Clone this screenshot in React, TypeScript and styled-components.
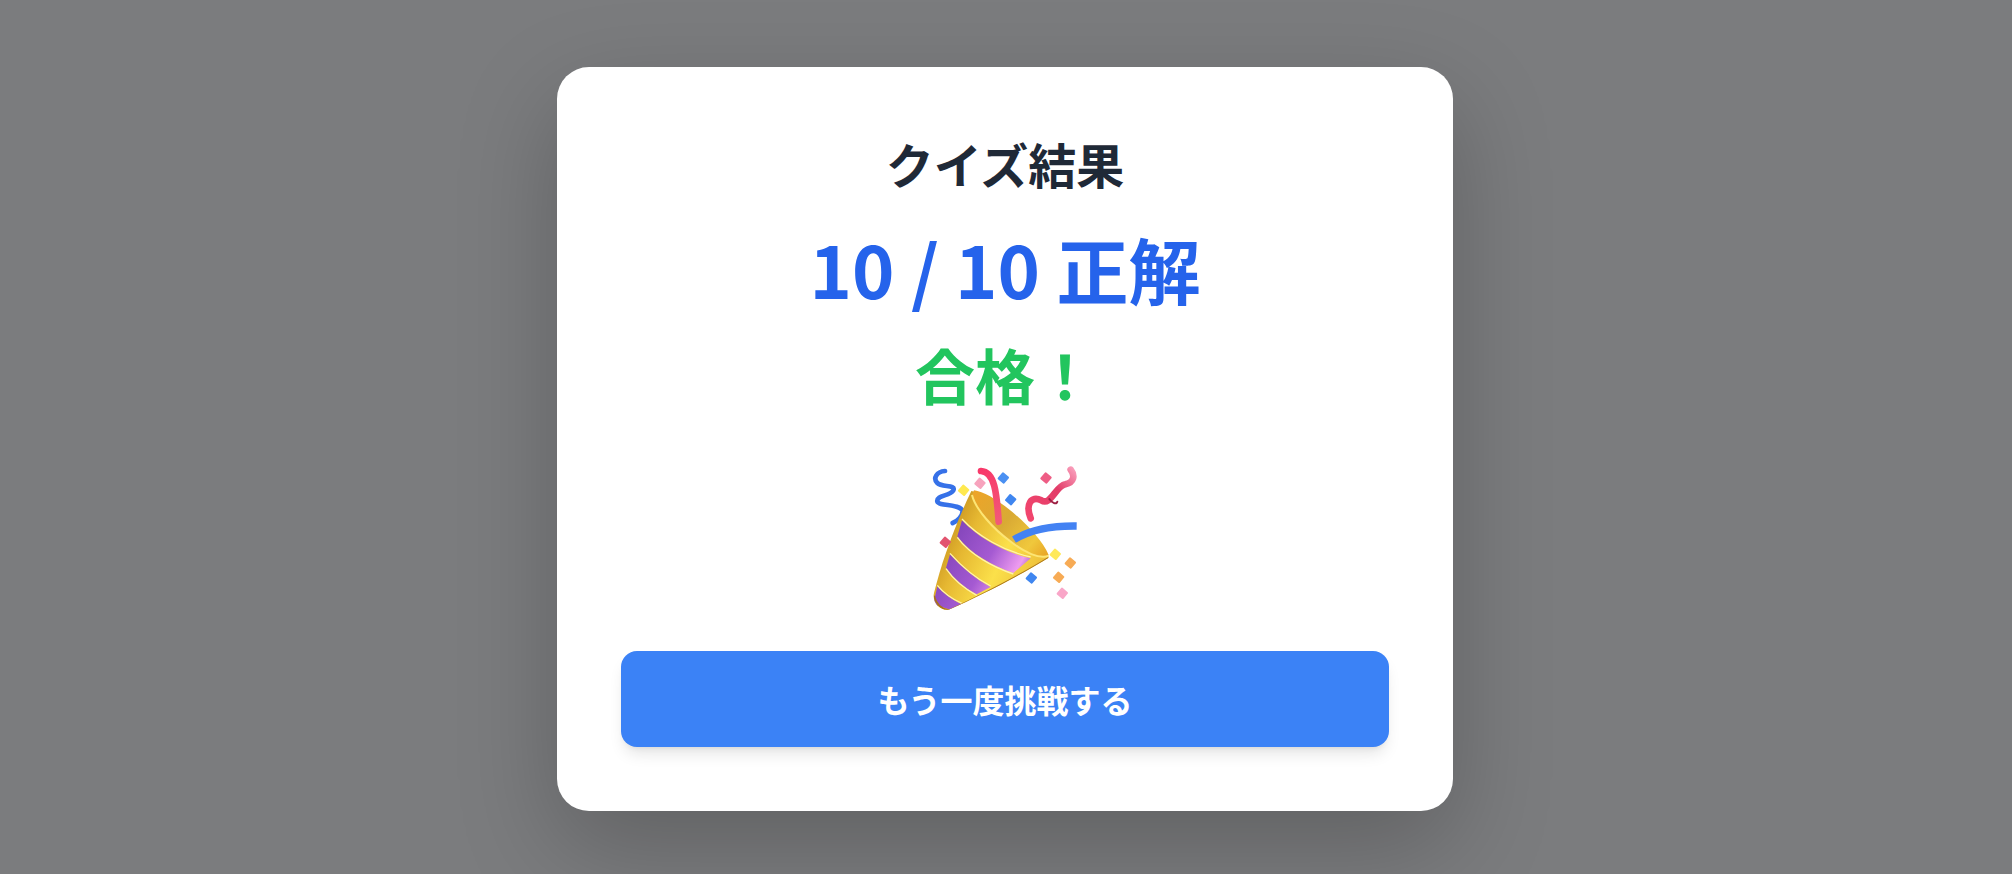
import React from "react";
import styled, { createGlobalStyle } from "styled-components";

const GlobalStyle = createGlobalStyle`
  html, body {
    margin: 0;
    padding: 0;
    background: #7b7c7e;
  }
  * {
    box-sizing: border-box;
  }
`;

const Overlay = styled.div`
  width: 100%;
  height: 874px;
  overflow: hidden;
  background: #7b7c7e;
  display: flex;
  align-items: flex-start;
  justify-content: center;
  padding: 67px 2px 0 0;
  font-family: "Noto Sans CJK JP", "Noto Sans", sans-serif;
`;

const Card = styled.div`
  width: 896px;
  height: 744px;
  padding: 64px;
  background: #ffffff;
  border-radius: 32px;
  box-shadow: 0 35px 100px rgba(0, 0, 0, 0.22);
  display: flex;
  flex-direction: column;
  align-items: center;
  text-align: center;
`;

const Title = styled.h2`
  margin: 0 0 17px;
  font-size: 48px;
  line-height: 64px;
  font-weight: 700;
  color: #1f2937;
`;

const Score = styled.p`
  margin: 0 0 5px;
  font-size: 72px;
  line-height: 112px;
  font-weight: 700;
  color: #2563eb;
`;

const Verdict = styled.p`
  margin: 0 0 30px;
  font-size: 60px;
  line-height: 90px;
  font-weight: 700;
  color: #22c55e;
`;

const EmojiBox = styled.div`
  height: 170px;
  margin-bottom: 32px;
`;

const RetryButton = styled.button`
  width: 100%;
  height: 96px;
  border: none;
  border-radius: 16px;
  background: #3b82f6;
  color: #ffffff;
  font-family: inherit;
  font-size: 32px;
  font-weight: 700;
  box-shadow: 0 10px 15px -3px rgba(0, 0, 0, 0.1), 0 4px 6px -4px rgba(0, 0, 0, 0.1);
  cursor: pointer;
`;

const confetti = [
  { x: 240, y: 103, c: "#f7a3bd" },
  { x: 191, y: 124, c: "#ffe94f" },
  { x: 310, y: 87, c: "#4a90f2" },
  { x: 332, y: 152, c: "#3f86f0" },
  { x: 438, y: 87, c: "#ee5d85" },
  { x: 136, y: 280, c: "#e2546f" },
  { x: 466, y: 316, c: "#ffe95a" },
  { x: 511, y: 342, c: "#f7ab55" },
  { x: 476, y: 385, c: "#f7ab55" },
  { x: 394, y: 387, c: "#3f86f0" },
  { x: 487, y: 433, c: "#f9a6c8" }
];

const conePath =
  "M214 126 C160 240 125 340 102 432 C96 460 118 486 146 482 C240 440 350 385 446 326 C430 270 280 135 214 126 Z";

const PartyPopper = () => (
  <svg width="210" height="170" viewBox="0 0 630 510" aria-label="🎉">
    <defs>
      <linearGradient id="gold" x1="100" y1="260" x2="400" y2="400" gradientUnits="userSpaceOnUse">
        <stop offset="0" stopColor="#c08a1a" />
        <stop offset="0.3" stopColor="#e6b832" />
        <stop offset="0.65" stopColor="#fbe04a" />
        <stop offset="1" stopColor="#eec03a" />
      </linearGradient>
      <linearGradient id="inner" x1="220" y1="130" x2="440" y2="320" gradientUnits="userSpaceOnUse">
        <stop offset="0" stopColor="#eda428" />
        <stop offset="0.45" stopColor="#d9aa34" />
        <stop offset="0.8" stopColor="#f0c83c" />
        <stop offset="1" stopColor="#e8a526" />
      </linearGradient>
      <linearGradient id="purple" x1="120" y1="250" x2="380" y2="400" gradientUnits="userSpaceOnUse">
        <stop offset="0" stopColor="#7a40b4" />
        <stop offset="0.55" stopColor="#a55ad2" />
        <stop offset="0.85" stopColor="#ee9cf0" />
        <stop offset="1" stopColor="#8a4ab0" />
      </linearGradient>
      <linearGradient id="ribbon" x1="380" y1="200" x2="530" y2="60" gradientUnits="userSpaceOnUse">
        <stop offset="0" stopColor="#f2466e" />
        <stop offset="0.6" stopColor="#e23c68" />
        <stop offset="1" stopColor="#fba4c0" />
      </linearGradient>
      <linearGradient id="redRibbon" x1="243" y1="60" x2="296" y2="220" gradientUnits="userSpaceOnUse">
        <stop offset="0" stopColor="#f8386a" />
        <stop offset="1" stopColor="#f25a78" />
      </linearGradient>
      <clipPath id="coneClip">
        <path d={conePath} />
      </clipPath>
    </defs>

    <path d="M135 66 C110 68 98 88 112 102 C126 116 168 106 160 124 C150 142 108 138 112 158 C118 172 180 164 188 186 C188 202 172 216 158 222" fill="none" stroke="#3671e8" strokeWidth="14" strokeLinecap="round" />

    <path d={conePath} fill="url(#gold)" />

    <path d="M222 124 C280 130 412 240 446 318 C420 332 372 310 330 276 C280 240 226 180 216 140 Z" fill="url(#inner)" />

    <g clipPath="url(#coneClip)">
      <path d="M186 214 C232 264 310 310 392 328 L340 372 C280 352 210 314 172 262 Z" fill="url(#purple)" />
      <path d="M150 316 C182 352 226 390 272 414 L230 436 C190 414 160 388 138 356 Z" fill="url(#purple)" />
      <path d="M112 412 C130 434 158 454 186 466 L156 484 L100 466 Z" fill="url(#purple)" />
      <path d="M186 210 C232 260 310 306 392 324" fill="none" stroke="#fff3a8" strokeWidth="4" />
      <path d="M172 265 C210 317 280 355 340 375" fill="none" stroke="#fff3a8" strokeWidth="4" />
      <path d="M150 313 C182 349 226 387 272 411" fill="none" stroke="#fff3a8" strokeWidth="4" />
      <path d="M138 359 C160 391 190 417 230 439" fill="none" stroke="#fff3a8" strokeWidth="4" />
      <path d="M112 409 C130 431 158 451 186 463" fill="none" stroke="#fff3a8" strokeWidth="4" />
      <path d="M102 440 C110 470 130 482 148 484 C240 440 350 385 446 326" fill="none" stroke="#a8741a" strokeWidth="5" />
    </g>

    <path d="M216 138 C226 180 280 240 330 276 C372 310 420 332 446 320" fill="none" stroke="#fde574" strokeWidth="6" />
    <path d="M243 66 C284 68 290 130 296 218" fill="none" stroke="url(#redRibbon)" strokeWidth="20" strokeLinecap="round" />
    <path d="M342 272 C390 242 460 230 530 231" fill="none" stroke="#4382f3" strokeWidth="22" />
    <path d="M392 208 C376 168 392 138 424 154 C452 172 466 112 496 106 C522 100 526 80 512 62" fill="none" stroke="url(#ribbon)" strokeWidth="20" strokeLinecap="round" />
    <path d="M448 150 C456 162 470 168 472 158" fill="none" stroke="#9c2144" strokeWidth="6" strokeLinecap="round" />

    {confetti.map((piece, index) => (
      <rect
        key={index}
        x={piece.x - 13}
        y={piece.y - 13}
        width="26"
        height="26"
        rx="3"
        fill={piece.c}
        transform={`rotate(40 ${piece.x} ${piece.y})`}
      />
    ))}
  </svg>
);

export default function App() {
  return (
    <>
      <GlobalStyle />
      <Overlay>
        <Card>
          <Title>クイズ結果</Title>
          <Score>10 / 10 正解</Score>
          <Verdict>合格！</Verdict>
          <EmojiBox>
            <PartyPopper />
          </EmojiBox>
          <RetryButton>もう一度挑戦する</RetryButton>
        </Card>
      </Overlay>
    </>
  );
}
